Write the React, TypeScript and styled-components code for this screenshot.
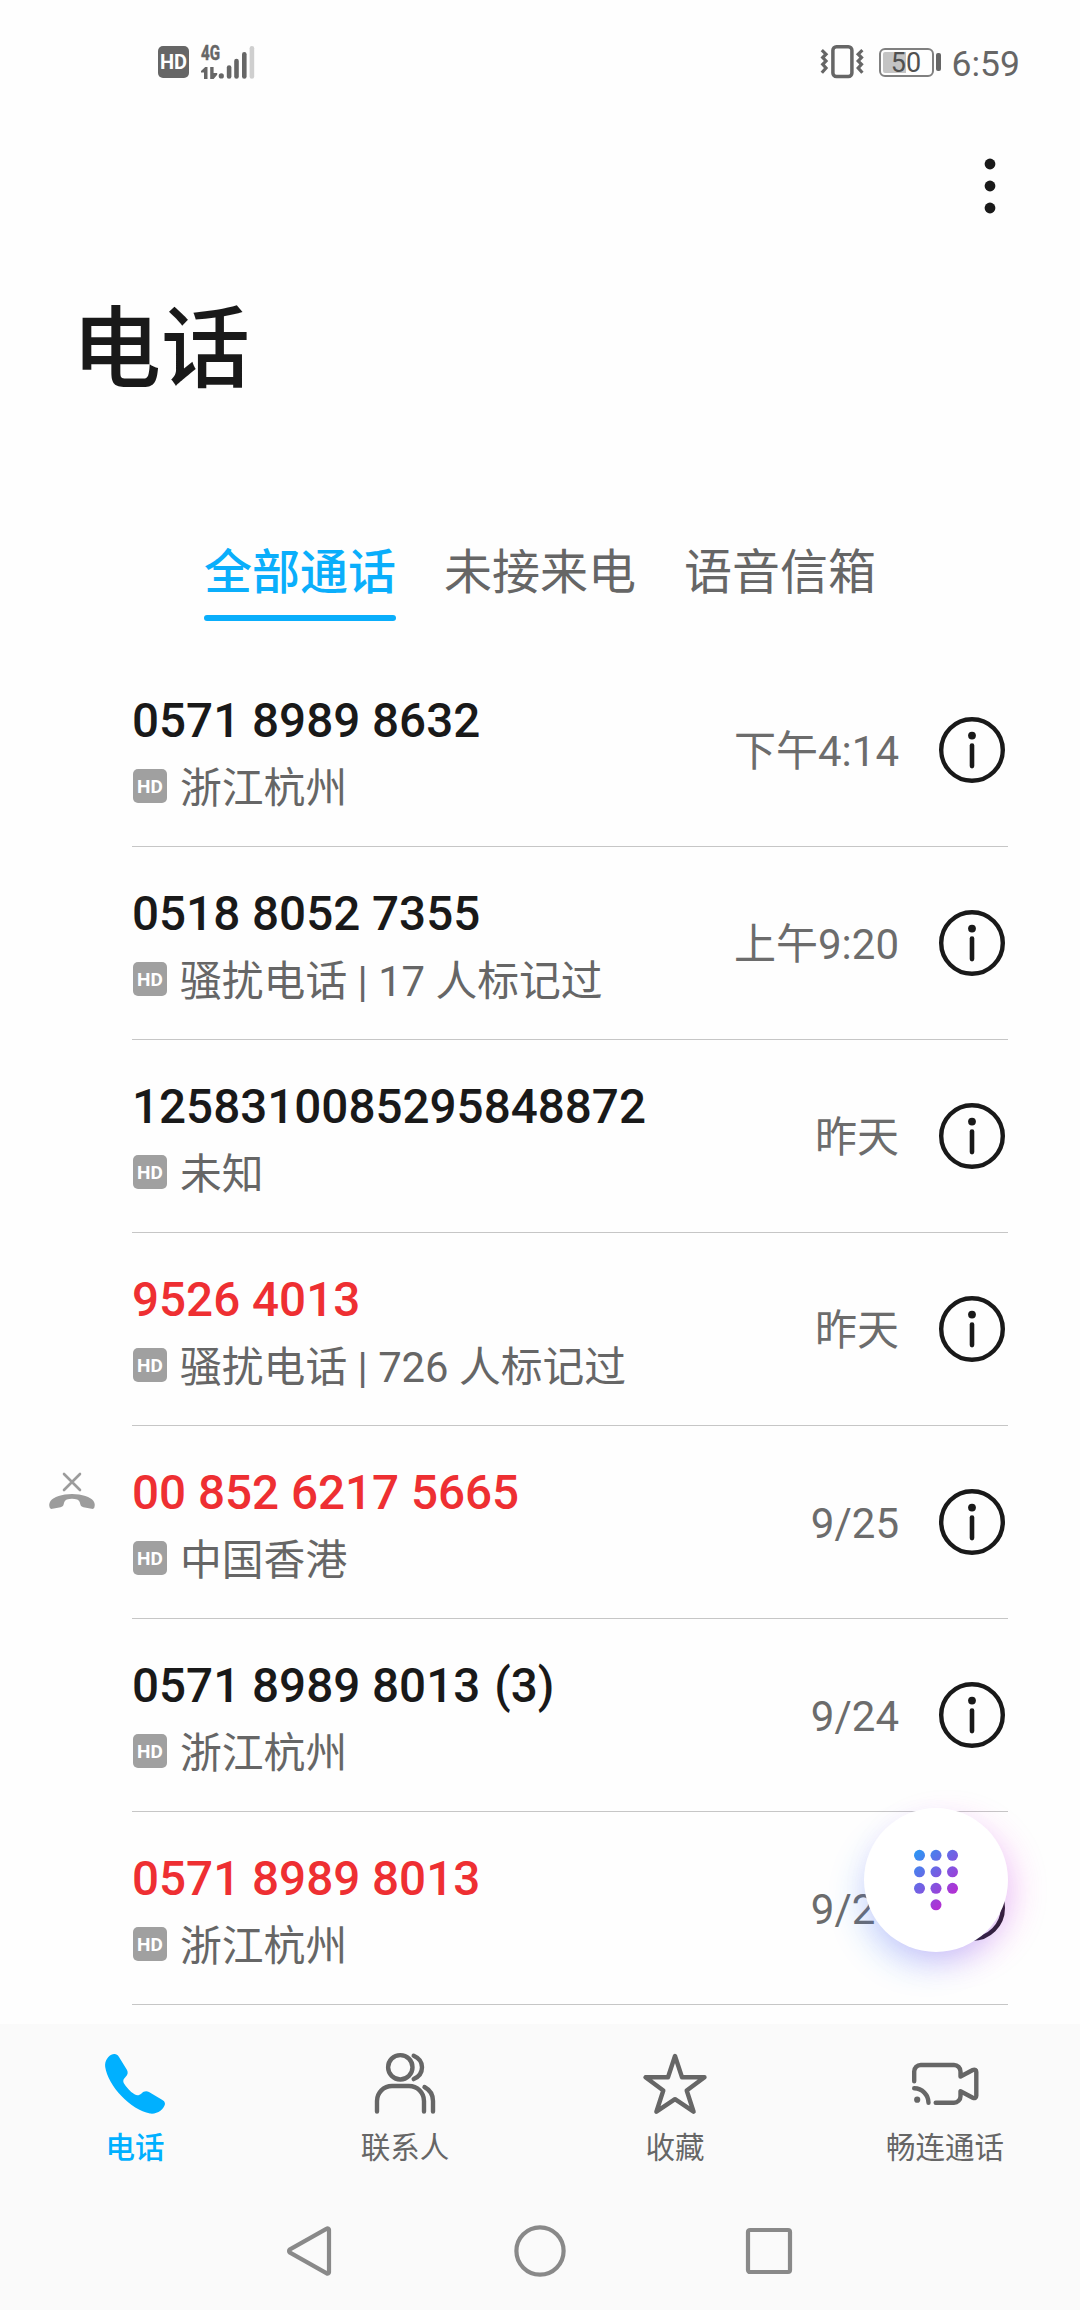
import React from 'react';
import styled, { createGlobalStyle } from 'styled-components';

const INK = '#191919';
const GREY = '#666666';
const BLUE = '#0aaefb';
const RED = '#ee2f32';

const GlobalStyle = createGlobalStyle`
  * { box-sizing: border-box; }
  body {
    margin: 0;
    background: #fefefe;
    font-family: Roboto, "Noto Sans CJK SC", sans-serif;
    -webkit-font-smoothing: antialiased;
  }
  svg { display: block; flex: none; overflow: visible; }
`;

const Screen = styled.div`
  position: relative;
  display: flex;
  flex-direction: column;
  width: 1080px;
  height: 2310px;
  overflow: hidden;
  background: #fefefe;
  color: ${INK};
`;

const StatusBar = styled.header`
  display: flex;
  justify-content: space-between;
  align-items: center;
  height: 124px;
  padding: 0 60px 0 158px;
`;

const StatusGroup = styled.div`
  display: flex;
  align-items: center;
`;

const StatusHd = styled.div`
  display: flex;
  align-items: center;
  justify-content: center;
  width: 31px;
  height: 32px;
  margin-right: 12px;
  border-radius: 5px;
  background: ${GREY};
  color: #fff;
  font-size: 20px;
  font-weight: 700;
  line-height: 32px;
`;

const Battery = styled.div`
  display: flex;
  align-items: center;
  margin: 0 11px 0 16px;
`;

const BatteryShell = styled.div`
  width: 55px;
  height: 29px;
  padding: 2px;
  border: 2px solid #808080;
  border-radius: 6px;
`;

const BatteryFill = styled.div<{ $level: number }>`
  height: 21px;
  border-radius: 2px 0 0 2px;
  background: linear-gradient(90deg, #c4c4c4 ${p => p.$level}%, transparent ${p => p.$level}%);
  color: #505050;
  font-size: 27px;
  line-height: 22px;
  text-align: center;
`;

const BatteryTip = styled.div`
  width: 5px;
  height: 18px;
  margin-left: 2px;
  border-radius: 2px;
  background: ${GREY};
`;

const Clock = styled.div`
  margin-top: 3px;
  color: ${GREY};
  font-size: 35.5px;
  line-height: 42px;
`;

const Toolbar = styled.div`
  display: flex;
  justify-content: flex-end;
  height: 124px;
  padding: 34px 84px 0 0;
`;

const Title = styled.h1`
  height: 278px;
  margin: 0;
  padding: 40px 0 0 72px;
  font-size: 89px;
  font-weight: 500;
  line-height: 124px;
`;

const Tabs = styled.nav`
  display: flex;
  justify-content: center;
  gap: 48px;
  height: 128px;
`;

const TabCell = styled.div<{ $active?: boolean }>`
  display: flex;
  flex-direction: column;
  width: 192px;
  padding-top: 12px;
  color: ${p => (p.$active ? BLUE : GREY)};
  font-size: 48px;
  font-weight: ${p => (p.$active ? 500 : 400)};
  line-height: 70px;
  white-space: nowrap;
`;

const TabLine = styled.span`
  height: 6px;
  margin-top: 7px;
  border-radius: 3px;
  background: ${BLUE};
`;

const CallList = styled.main`
  height: 1370px;
  overflow: hidden;
`;

const CallRow = styled.article`
  display: flex;
  height: 193px;
  padding-right: 72px;
`;

const Gutter = styled.div`
  width: 132px;
  padding: 45px 0 0 48px;
`;

const RowBody = styled.div`
  display: flex;
  flex: 1;
  align-items: center;
  border-bottom: 1px solid #c6c6c6;
  padding-right: 3px;
`;

const Caller = styled.div`
  flex: 1;
  align-self: flex-start;
  padding-top: 39px;
`;

const Number = styled.div<{ $missed?: boolean }>`
  color: ${p => (p.$missed ? RED : INK)};
  font-size: 47.6px;
  font-weight: 500;
  line-height: 56px;
  white-space: nowrap;
`;

const Count = styled.span`
  margin-left: 14px;
`;

const Detail = styled.div`
  display: flex;
  align-items: center;
  gap: 13px;
  height: 60px;
  margin-top: 10px;
  color: ${GREY};
  font-size: 41.8px;
  line-height: 60px;
  white-space: nowrap;
`;

const HdTag = styled.span`
  width: 34px;
  height: 34px;
  margin: -7px 0 0 1px;
  border-radius: 5px;
  background: #a0a0a0;
  color: #fff;
  font-size: 19px;
  font-weight: 700;
  line-height: 35px;
  text-align: center;
`;

const Time = styled.time`
  margin: 4px 40px 0 0;
  color: #6c6c6c;
  font-size: 42px;
  line-height: 60px;
`;

const DialButton = styled.button`
  position: absolute;
  left: 864px;
  top: 1808px;
  display: flex;
  align-items: center;
  justify-content: center;
  width: 144px;
  height: 144px;
  padding: 0;
  border: 0;
  border-radius: 50%;
  background: #fff;
  box-shadow:
    -9px 18px 34px -6px rgba(30, 130, 255, 0.24),
    11px 10px 34px -6px rgba(235, 40, 220, 0.26);
`;

const BottomNav = styled.nav`
  display: grid;
  grid-template-columns: repeat(4, 1fr);
  height: 168px;
  background: #fafafa;
`;

const NavItem = styled.div<{ $active?: boolean }>`
  display: flex;
  flex-direction: column;
  align-items: center;
  gap: 11px;
  padding-top: 28px;
  color: ${p => (p.$active ? '#00b0ff' : GREY)};
  font-size: 29.5px;
  font-weight: ${p => (p.$active ? 500 : 400)};
  line-height: 42px;
`;

const SystemNav = styled.footer`
  display: flex;
  justify-content: space-between;
  height: 118px;
  padding: 33px 286px 0;
  background: #fafafa;
`;

const Signal = () => (
  <svg width="54" height="34" viewBox="0 0 54 34" fill={GREY}>
    <text
      x="0"
      y="15.200"
      fontSize="21"
      fontWeight="700"
      textLength="19"
      lengthAdjust="spacingAndGlyphs"
      stroke={GREY}
      strokeWidth="0.500"
    >
      4G
    </text>
    <path d="M6.500 22v12H3v-6.500H0v-1.600L4.200 22zM9.200 22h3.400v6h3.600v1.800L12.600 34H9.200z" />
    <circle cx="20.300" cy="30.900" r="2.600" />
    <rect x="25.800" y="20.300" width="4.600" height="13.400" rx="2.300" />
    <rect x="33.200" y="13.700" width="4.600" height="20" rx="2.300" />
    <rect x="41" y="7" width="4.600" height="26.700" rx="2.300" />
    <rect x="48.600" y="1" width="4.600" height="32.700" rx="2.300" fill="#cfcfcf" />
  </svg>
);

const Vibrate = () => (
  <svg width="42" height="34" viewBox="0 0 42 34" fill="none" stroke={GREY} strokeWidth="3.500">
    <rect x="11.900" y="1.800" width="19" height="29.800" rx="3.500" />
    <path d="M.8 5.200 5 9.200l-3.300 3.300L5 16l-3.300 3.400L5 23 .8 27.800" strokeWidth="3.200" />
    <path d="m41.400 5.200-4.200 4 3.300 3.300-3.300 3.500 3.300 3.400-3.300 3.600 4.200 4.800" strokeWidth="3.200" />
  </svg>
);

const More = () => (
  <svg width="12" height="56" viewBox="0 0 12 56" fill={INK}>
    <circle cx="6" cy="6" r="5.400" />
    <circle cx="6" cy="28" r="5.400" />
    <circle cx="6" cy="50" r="5.400" />
  </svg>
);

const Info = () => (
  <svg width="66" height="66" viewBox="0 0 66 66" fill={INK}>
    <circle cx="33" cy="33" r="30.800" fill="none" stroke={INK} strokeWidth="4.400" />
    <circle cx="33" cy="18.600" r="3.900" />
    <rect x="30.700" y="26.200" width="4.600" height="25.200" rx="2.300" />
  </svg>
);

const MissedCall = () => (
  <svg width="48" height="40" viewBox="0 0 48 40" fill="#9c9c9c">
    <path d="m16 3 16 16M32 3 16 19" stroke="#9c9c9c" strokeWidth="2.600" strokeLinecap="round" />
    <path d="M24 23C14 23 5.500 26 2.500 30C1 32.200 1 34.500 1.600 36.300C2 37.700 3.200 38.100 4.500 37.800L12.500 36.200C14.300 35.700 15.200 35 15.700 33.200C16.200 30.600 17 29.300 18.800 28.500C22 27.400 26 27.400 29.200 28.500C31 29.300 31.800 30.600 32.300 33.200C32.800 35 33.700 35.700 35.500 36.200L43.500 37.800C44.800 38.100 46 37.700 46.400 36.300C47 34.500 47 32.200 45.500 30C42.500 26 34 23 24 23Z" />
  </svg>
);

const DIAL_DOTS = [0, 1, 2, 3, 4, 5, 6, 7, 8, 10];

const Dialpad = () => (
  <svg width="44" height="60" viewBox="0 0 44 60">
    <defs>
      <linearGradient id="dial" gradientUnits="userSpaceOnUse" x1="1" y1="1" x2="42" y2="42">
        <stop offset="0" stopColor="#2c96f4" />
        <stop offset="1" stopColor="#b32fd3" />
      </linearGradient>
    </defs>
    {DIAL_DOTS.map(i => (
      <circle
        key={i}
        cx={5.5 + (i % 3) * 16.5}
        cy={5.3 + Math.floor(i / 3) * 16.5}
        r="5.500"
        fill="url(#dial)"
      />
    ))}
  </svg>
);

const NavIcon = styled.svg.attrs({ width: 64, height: 64, viewBox: '0 0 64 64' })`
  fill: none;
  stroke: currentColor;
  stroke-width: 4.4;
  stroke-linecap: round;
  stroke-linejoin: round;
`;

const PhoneIcon = () => (
  <NavIcon>
    <path
      fill="currentColor"
      stroke="none"
      d="M11 2C5 3 1.500 9 2.200 15C5 34 28 58 47 61.500C54 62.500 61 57.500 62 52C62 49.500 60.500 48.500 59 47.700L46 40C43 38.500 40.500 39.500 38.500 41.500C36 43.700 34 43.800 31.500 42.300C27 39.500 23 35 20.700 31C19.700 28.500 20.500 27 22.500 25C25 22.500 25.200 20.500 24 18L16 5C14.500 2.500 13 1.800 11 2Z"
    />
  </NavIcon>
);

const ContactsIcon = () => (
  <NavIcon>
    <circle cx="27.300" cy="15.300" r="12.200" />
    <path d="M4 59.600V49a15 15 0 0 1 15-15h17a15 15 0 0 1 15 15v10.600" />
    <path d="M40.700 3.700C46 6 49 10.500 49 15.300S46 24.800 40.700 27.100M51.500 35C57 38 60 43 60 49v10.600" />
  </NavIcon>
);

const StarIcon = () => (
  <NavIcon>
    <path d="M32 4 39 25.200H61.500L43.700 38.500 50.600 59.700 32 47.200 13.400 59.700 20.300 38.500 2.500 25.200H25Z" />
  </NavIcon>
);

const VideoIcon = () => (
  <NavIcon>
    <path d="M1.200 29.300V19.500a6.500 6.500 0 0 1 6.500-6.500H41a6.500 6.500 0 0 1 6.500 6.500v5L59.800 18c2-.9 3.500.2 3.500 2v23.800c0 1.800-1.500 2.900-3.500 2L47.500 39.300v4.900a6.500 6.500 0 0 1-6.500 6.500H22.700M1.200 36.300a14.500 14.500 0 0 1 14.300 14.500" />
    <circle cx="4.200" cy="47.700" r="3.100" fill="currentColor" stroke="none" />
  </NavIcon>
);

const SystemIcon = styled.svg.attrs({ width: 52, height: 52, viewBox: '0 0 52 52' })`
  fill: none;
  stroke: #898989;
  stroke-width: 4.2;
  stroke-linejoin: round;
`;

interface Call {
  number: string;
  count?: number;
  detail: string;
  time: string;
  missed?: boolean;
  rejected?: boolean;
}

const CALLS: Call[] = [
  { number: '0571 8989 8632', detail: '浙江杭州', time: '下午4:14' },
  { number: '0518 8052 7355', detail: '骚扰电话 | 17 人标记过', time: '上午9:20' },
  { number: '1258310085295848872', detail: '未知', time: '昨天' },
  { number: '9526 4013', detail: '骚扰电话 | 726 人标记过', time: '昨天', missed: true },
  { number: '00 852 6217 5665', detail: '中国香港', time: '9/25', missed: true, rejected: true },
  { number: '0571 8989 8013', count: 3, detail: '浙江杭州', time: '9/24' },
  { number: '0571 8989 8013', detail: '浙江杭州', time: '9/24', missed: true },
];

const NAV = [
  { label: '电话', Icon: PhoneIcon },
  { label: '联系人', Icon: ContactsIcon },
  { label: '收藏', Icon: StarIcon },
  { label: '畅连通话', Icon: VideoIcon },
];

const TABS = ['全部通话', '未接来电', '语音信箱'];

export default function App() {
  return (
    <Screen>
      <GlobalStyle />
      <StatusBar>
        <StatusGroup>
          <StatusHd>HD</StatusHd>
          <Signal />
        </StatusGroup>
        <StatusGroup>
          <Vibrate />
          <Battery>
            <BatteryShell>
              <BatteryFill $level={50}>50</BatteryFill>
            </BatteryShell>
            <BatteryTip />
          </Battery>
          <Clock>6:59</Clock>
        </StatusGroup>
      </StatusBar>
      <Toolbar>
        <More />
      </Toolbar>
      <Title>电话</Title>
      <Tabs>
        {TABS.map((label, i) => (
          <TabCell key={label} $active={i === 0}>
            {label}
            {i === 0 && <TabLine />}
          </TabCell>
        ))}
      </Tabs>
      <CallList>
        {CALLS.map((call, i) => (
          <CallRow key={i}>
            <Gutter>{call.rejected && <MissedCall />}</Gutter>
            <RowBody>
              <Caller>
                <Number $missed={call.missed}>
                  {call.number}
                  {call.count && <Count>({call.count})</Count>}
                </Number>
                <Detail>
                  <HdTag>HD</HdTag>
                  {call.detail}
                </Detail>
              </Caller>
              <Time>{call.time}</Time>
              <Info />
            </RowBody>
          </CallRow>
        ))}
      </CallList>
      <BottomNav>
        {NAV.map(({ label, Icon }, i) => (
          <NavItem key={label} $active={i === 0}>
            <Icon />
            {label}
          </NavItem>
        ))}
      </BottomNav>
      <SystemNav>
        <SystemIcon>
          <path d="M40.800 3.600c1-.6 2.200 0 2.200 1.200v42.400c0 1.200-1.200 1.800-2.200 1.200L4 27.700c-1.300-.9-1.300-2.500 0-3.400Z" />
        </SystemIcon>
        <SystemIcon>
          <circle cx="26" cy="26" r="23.600" />
        </SystemIcon>
        <SystemIcon>
          <rect x="6" y="5" width="42" height="42" rx="2" />
        </SystemIcon>
      </SystemNav>
      <DialButton aria-label="拨号">
        <Dialpad />
      </DialButton>
    </Screen>
  );
}
